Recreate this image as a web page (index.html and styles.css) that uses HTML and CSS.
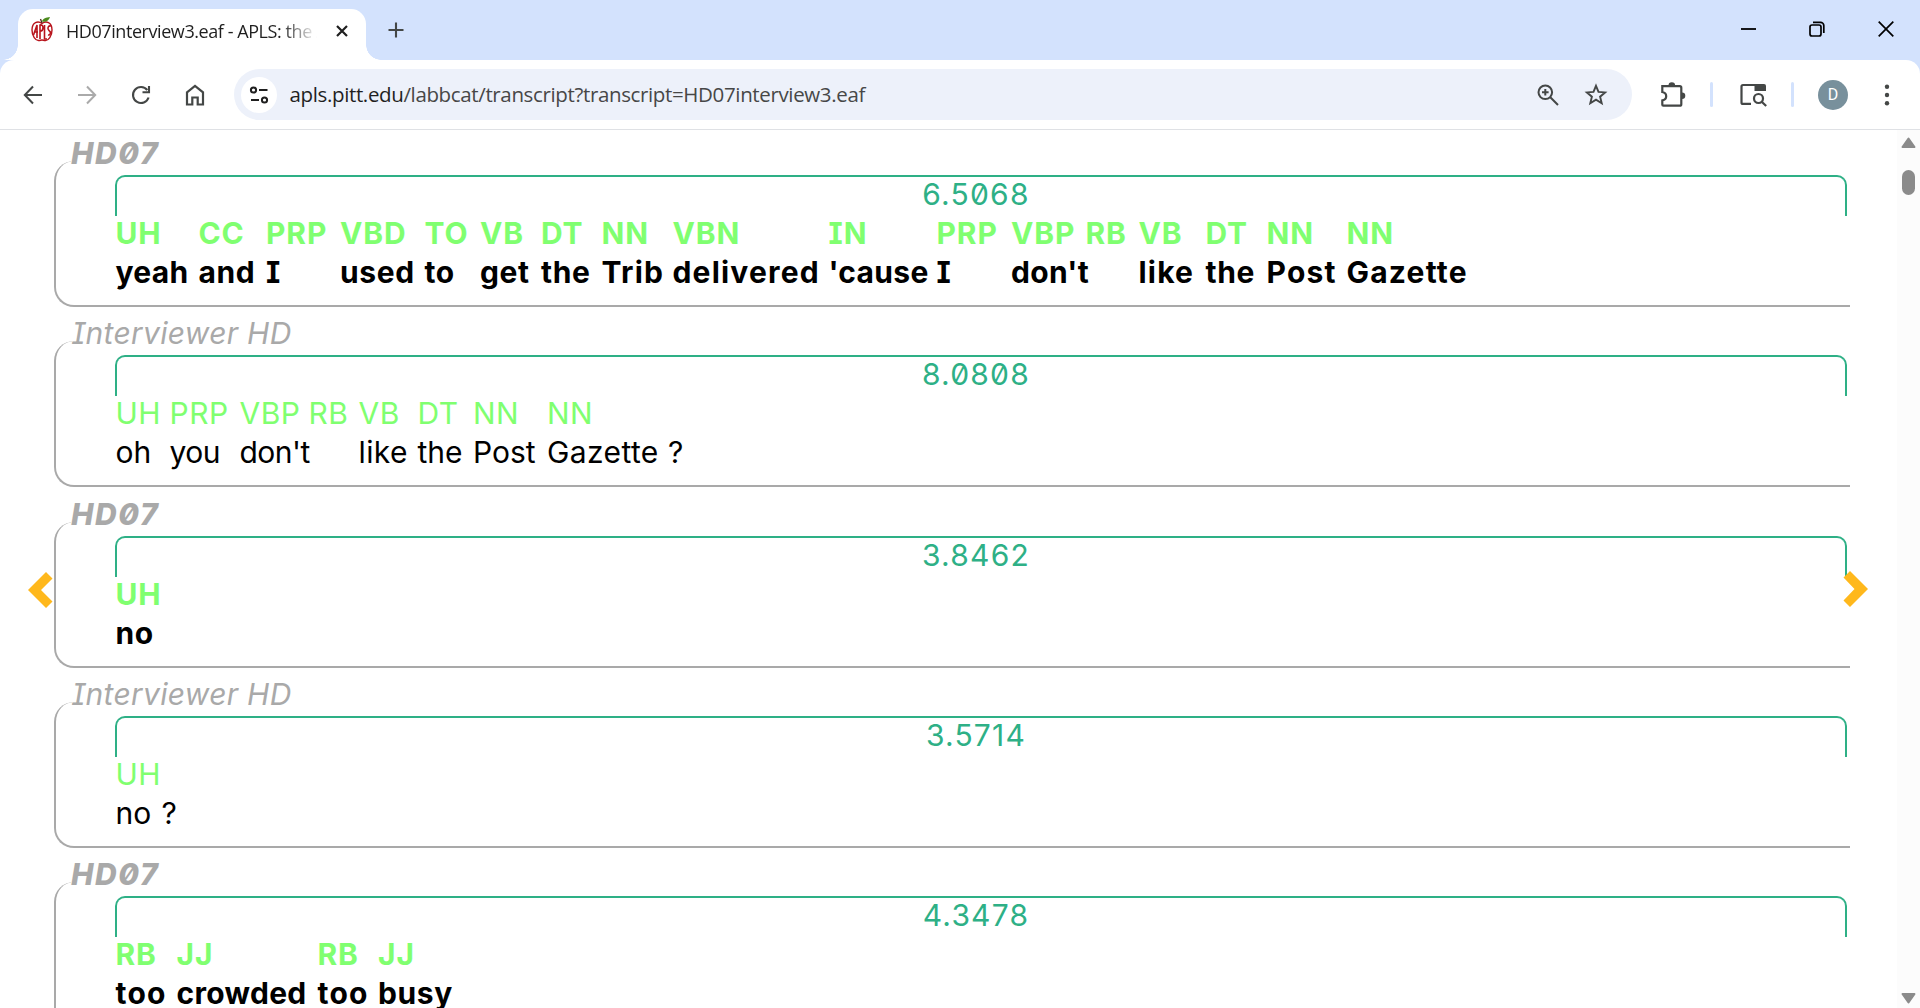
FILE: index.html
```html
<!DOCTYPE html>
<html lang="en">
<head>
<meta charset="utf-8">
<title>HD07interview3.eaf - APLS</title>
<link rel="stylesheet" href="styles.css">
</head>
<body>
<header class="tabstrip">
  <div class="tab">
    <svg class="favicon" width="22" height="26" viewBox="0 0 22 26">
      <path d="M11 6.500C7 3.500 1 5 1 13c0 6 3.500 11 7 10.500 1.500-.2 2-.5 3-.5s1.500.3 3 .5C17.500 24 21 19 21 13c0-8-6-9.500-10-6.500z" fill="#fff" stroke="#b8141c" stroke-width="1.400"/>
      <path d="M2.500 18 6 8v13M3 15h4M9 22V8c4-1 4 6 0 6M13.500 8v14h2.500M20 9c-3-1-4 3-2 4.500 2.500 1.500 1.500 5-1 4.500" fill="none" stroke="#b8141c" stroke-width="1.600"/>
      <path d="M11 6 9.500 2" stroke="#4b2a18" stroke-width="1.300"/>
      <path d="M11 4.500C12 1 15 .5 19 0c-1 3.500-4 5.500-8 4.500z" fill="#4a8a1c"/>
    </svg>
    <span class="tab-title">HD07interview3.eaf - APLS: the A</span>
    <svg class="tab-close" width="12" height="12" viewBox="0 0 12 12"><path d="M1 1l10 10M11 1 1 11" stroke="#1f1f1f" stroke-width="2.200"/></svg>
  </div>
  <svg class="new-tab" width="16" height="16" viewBox="0 0 16 16"><path d="M8 .5v15M.5 8h15" stroke="#444746" stroke-width="2.100"/></svg>
  <div class="window-buttons">
    <svg width="15" height="16" viewBox="0 0 15 16"><path d="M0 8h15" stroke="#000" stroke-width="1.800"/></svg>
    <svg width="16" height="16" viewBox="0 0 16 16" fill="none" stroke="#000" stroke-width="1.700"><rect x="1" y="4" width="11" height="11" rx="2"/><path d="M4 1.300h7.500a3.300 3.300 0 0 1 3.300 3.300V12"/></svg>
    <svg width="16" height="16" viewBox="0 0 16 16"><path d="M.7.700l14.600 14.600M15.300.7.700 15.300" stroke="#000" stroke-width="1.700"/></svg>
  </div>
</header>

<nav class="toolbar">
  <div class="nav-icons">
    <svg width="20" height="20" viewBox="0 0 20 20" fill="none" stroke="#444746" stroke-width="2"><path d="M19 10H3M10 1.500 1.800 10 10 18.500"/></svg>
    <svg width="20" height="20" viewBox="0 0 20 20" fill="none" stroke="#aaa" stroke-width="2"><path d="M1 10h16M10 1.500 18.200 10 10 18.500"/></svg>
    <svg width="20" height="20" viewBox="0 0 20 20" fill="none" stroke="#444746" stroke-width="2.100"><path d="M17.600 12.500A8 8 0 1 1 16.300 5M18 1v6.300h-6.500"/></svg>
    <svg width="20" height="22" viewBox="0 0 20 22" fill="none" stroke="#444746" stroke-width="2.200"><path d="M2 8.300 10 2l8 6.300V20.500h-5.300v-7H7.300v7H2z"/></svg>
  </div>
  <div class="omnibox">
    <span class="site-info"><svg width="20" height="18" viewBox="0 0 20 18" fill="none" stroke="#1f1f1f" stroke-width="2"><circle cx="4.500" cy="4" r="2.600"/><path d="M10 4h8.500M2 14h8"/><circle cx="15.500" cy="14" r="2.600"/></svg></span>
    <span class="url"><span class="host">apls.pitt.edu</span>/labbcat/transcript?transcript=HD07interview3.eaf</span>
    <svg class="magnify" width="22" height="22" viewBox="0 0 22 22" fill="none" stroke="#444746" stroke-width="2"><circle cx="8.300" cy="8.300" r="6.800"/><path d="M13.300 13.300 21 21M8.300 5v6.600M5 8.300h6.600"/></svg>
    <svg class="star" width="24" height="23" viewBox="0 0 24 23" fill="none" stroke="#444746" stroke-width="1.900"><path d="M12 2.800l2.500 6.100 6.600.500-5 4.300 1.600 6.500L12 16.700l-5.700 3.500 1.600-6.500-5-4.300 6.600-.5z"/></svg>
  </div>
  <svg class="puzzle" width="26" height="26" viewBox="0 0 26 26"><path d="M2.300 4.200h17.500a1.500 1.500 0 0 1 1.500 1.500v16.500a1.500 1.500 0 0 1-1.500 1.500H3.300a1 1 0 0 1-1-1v-4.400c5.200-1 5.200-7.300 0-8.300z" fill="none" stroke="#444746" stroke-width="2.200"/><path d="M8.500 3.500a3.300 3.300 0 0 1 6.600 0zM22 10.500a3.300 3.300 0 0 1 0 6.600z" fill="#444746"/></svg>
  <i class="divider"></i>
  <svg class="side-search" width="27" height="24" viewBox="0 0 27 24" fill="none" stroke="#444746" stroke-width="2.200"><path d="M11 20.900H3a1.500 1.500 0 0 1-1.500-1.500V3.500A1.500 1.500 0 0 1 3 2h21"/><path d="M14.500 1H24a2 2 0 0 1 2 2v5H14.500z" fill="#444746" stroke="none"/><circle cx="18.500" cy="15.500" r="4.500"/><path d="m21.700 18.700 4.500 4.300"/></svg>
  <i class="divider"></i>
  <span class="avatar">D</span>
  <svg class="menu" width="6" height="22" viewBox="0 0 6 22" fill="#444746"><circle cx="3" cy="2.800" r="2.200"/><circle cx="3" cy="11" r="2.200"/><circle cx="3" cy="19.200" r="2.200"/></svg>
</nav>

<div class="viewport">
  <main class="transcript">
    <section class="turn main-speaker">
      <h2 class="speaker">HD07</h2>
      <div class="utterance">
        <div class="rate">6.5068</div>
        <div class="tokens">
          <span class="token tight" style="width:83px"><b>UH</b><span>yeah</span></span>
          <span class="token" style="width:67.500px"><b>CC</b><span>and</span></span>
          <span class="token" style="width:74px"><b>PRP</b><span>I</span></span>
          <span class="token" style="width:84.500px"><b>VBD</b><span>used</span></span>
          <span class="token" style="width:55.500px"><b>TO</b><span>to</span></span>
          <span class="token" style="width:61px"><b>VB</b><span>get</span></span>
          <span class="token" style="width:60.500px"><b>DT</b><span>the</span></span>
          <span class="token wide" style="width:71px"><b>NN</b><span>Trib</span></span>
          <span class="token wide" style="width:156px"><b>VBN</b><span>delivered</span></span>
          <span class="token tight" style="width:108px"><b>IN</b><span>'cause</span></span>
          <span class="token" style="width:74.500px"><b>PRP</b><span>I</span></span>
          <span class="token tight" style="width:74.500px"><b>VBP</b><span>don't</span></span>
          <span class="token" style="width:53px"><b>RB</b></span>
          <span class="token wide" style="width:67px"><b>VB</b><span>like</span></span>
          <span class="token" style="width:61px"><b>DT</b><span>the</span></span>
          <span class="token wide" style="width:80px"><b>NN</b><span>Post</span></span>
          <span class="token wide" style="width:130px"><b>NN</b><span>Gazette</span></span>
        </div>
      </div>
    </section>
    <section class="turn">
      <h2 class="speaker">Interviewer HD</h2>
      <div class="utterance">
        <div class="rate">8.0808</div>
        <div class="tokens">
          <span class="token" style="width:54px"><b>UH</b><span>oh</span></span>
          <span class="token tight" style="width:70px"><b>PRP</b><span>you</span></span>
          <span class="token tight" style="width:69px"><b>VBP</b><span>don't</span></span>
          <span class="token" style="width:50px"><b>RB</b></span>
          <span class="token wide" style="width:59px"><b>VB</b><span>like</span></span>
          <span class="token" style="width:55.500px"><b>DT</b><span>the</span></span>
          <span class="token" style="width:74px"><b>NN</b><span>Post</span></span>
          <span class="token wide" style="width:121px"><b>NN</b><span>Gazette</span></span>
          <span class="token" style="width:20px"><b>&nbsp;</b><span>?</span></span>
        </div>
      </div>
    </section>
    <section class="turn main-speaker">
      <h2 class="speaker">HD07</h2>
      <div class="utterance">
        <div class="rate">3.8462</div>
        <div class="tokens"><span class="token" style="width:50px"><b>UH</b><span>no</span></span></div>
      </div>
    </section>
    <section class="turn">
      <h2 class="speaker">Interviewer HD</h2>
      <div class="utterance">
        <div class="rate">3.5714</div>
        <div class="tokens">
          <span class="token" style="width:46px"><b>UH</b><span>no</span></span>
          <span class="token" style="width:20px"><b>&nbsp;</b><span>?</span></span>
        </div>
      </div>
    </section>
    <section class="turn main-speaker">
      <h2 class="speaker">HD07</h2>
      <div class="utterance">
        <div class="rate">4.3478</div>
        <div class="tokens">
          <span class="token wide" style="width:61px"><b>RB</b><span>too</span></span>
          <span class="token tight" style="width:141px"><b>JJ</b><span>crowded</span></span>
          <span class="token wide" style="width:60.500px"><b>RB</b><span>too</span></span>
          <span class="token" style="width:80px"><b>JJ</b><span>busy</span></span>
        </div>
      </div>
    </section>
  </main>
  <div class="scrollbar">
    <svg width="15" height="12" viewBox="0 0 15 12"><path d="M7.500 1.500 13.500 10H1.500z" fill="#8b8b8b" stroke="#8b8b8b" stroke-width="2" stroke-linejoin="round"/></svg>
    <i class="thumb"></i>
    <svg class="down" width="15" height="12" viewBox="0 0 15 12"><path d="M7.500 10.500 13.500 2H1.500z" fill="#8b8b8b" stroke="#8b8b8b" stroke-width="2" stroke-linejoin="round"/></svg>
  </div>
  <svg class="page-arrow prev" width="25" height="36" viewBox="0 0 25 36"><path d="M0 18 18 0l6.500 6.500L13 18l11.500 11.500L18 36z" fill="#ffb81c"/></svg>
  <svg class="page-arrow next" width="25" height="36" viewBox="0 0 25 36"><path d="M25 18 7 0 .5 6.500 11.500 18 .5 29.500 7 36z" fill="#ffb81c"/></svg>
</div>
</body>
</html>
```
FILE: styles.css
```css
* { box-sizing: border-box; }
svg { display: block; flex: none; }
body {
  margin: 0;
  height: 1008px;
  overflow: hidden;
  display: flex;
  flex-direction: column;
  background: #d3e2fd;
  font-family: "Open Sans", "Noto Sans", sans-serif;
}

/* Tab strip */
.tabstrip {
  height: 60px;
  flex: none;
  display: flex;
  align-items: flex-start;
  padding-left: 18px;
}
.tab {
  position: relative;
  width: 348px;
  height: 51px;
  margin-top: 9px;
  padding: 0 18px 8px 13px;
  border-radius: 15px 15px 0 0;
  background: #fff;
  display: flex;
  align-items: center;
}
.tab::before,
.tab::after {
  content: "";
  position: absolute;
  bottom: 0;
  width: 15px;
  height: 15px;
}
.tab::before { left: -15px; background: radial-gradient(circle at 0 0, transparent 14.500px, #fff 15px); }
.tab::after { right: -15px; background: radial-gradient(circle at 100% 0, transparent 14.500px, #fff 15px); }
.favicon { margin-top: -2px; }
.tab-title {
  width: 251px;
  margin-left: 13px;
  overflow: hidden;
  white-space: nowrap;
  font-size: 18px;
  letter-spacing: -0.430px;
  color: #1f1f1f;
  -webkit-mask-image: linear-gradient(90deg, #000 215px, transparent 251px);
  mask-image: linear-gradient(90deg, #000 215px, transparent 251px);
}
.tab-close { margin-left: auto; }
.new-tab { margin: 22px 0 0 22px; }
.window-buttons {
  display: flex;
  gap: 53px;
  margin: 21px 26px 0 auto;
}

/* Toolbar */
.toolbar {
  height: 70px;
  flex: none;
  display: flex;
  align-items: center;
  padding: 0 30px 0 23px;
  border-bottom: 1px solid #dfe1e5;
  border-radius: 14px 14px 0 0;
  background: #fff;
}
.nav-icons { display: flex; gap: 34px; align-items: center; width: 211px; }
.omnibox {
  width: 1398px;
  height: 51px;
  display: flex;
  align-items: center;
  padding: 0 24px 0 7px;
  border-radius: 26px;
  background: #edf1fa;
}
.site-info {
  width: 36px;
  height: 36px;
  border-radius: 50%;
  background: #fff;
  display: grid;
  place-items: center;
}
.url {
  margin-left: 12.500px;
  padding-bottom: 2px;
  font-size: 20.500px;
  letter-spacing: -0.360px;
  color: #474747;
}
.host { color: #1f1f1f; }
.magnify { margin-left: auto; }
.star { margin-left: 25px; }
.puzzle { margin-left: 28px; }
.divider { width: 3px; height: 25px; border-radius: 2px; background: #d3e2fd; margin-left: 24px; }
.side-search { margin-left: 27px; }
.avatar {
  width: 30px;
  height: 30px;
  margin-left: 24px;
  border-radius: 50%;
  background: #78909c;
  color: #fff;
  font: 16px/30px Roboto, sans-serif;
  text-align: center;
}
.menu { margin-left: auto; }

/* Page */
.viewport {
  position: relative;
  flex: 1;
  min-height: 0;
  overflow: hidden;
  display: flex;
  background: #fff;
  font: 30px Inter, "Liberation Sans", sans-serif;
  font-feature-settings: "zero", "cv08";
}
.transcript { flex: 1; margin-top: -3.330px; padding: 0 47px 0 54px; }
.turn { height: 180.330px; padding-top: 8.330px; }
.speaker {
  position: relative;
  width: fit-content;
  height: 36px;
  margin: 0 0 -10px 18px;
  background: #fff;
  font-size: 30px;
  font-weight: 400;
  font-style: italic;
  line-height: 36px;
  letter-spacing: 0.300px;
  color: #a9a9a9;
}
.utterance {
  height: 146px;
  padding: 14px 3px 0 59px;
  border: solid #a9a9a9;
  border-width: 0 0 2px 2px;
  border-radius: 20px 0 0 20px;
}
.rate {
  height: 41px;
  padding-right: 10px;
  border: 2px solid #2eb086;
  border-bottom: 0;
  border-radius: 10px 10px 0 0;
  text-align: center;
  line-height: 34px;
  letter-spacing: 1.200px;
  color: #2eb086;
}
.tokens { display: flex; margin: -2px 0 0 0.500px; }
.token { display: flex; flex-direction: column; flex: none; white-space: nowrap; line-height: 39px; }
.token b { font-weight: inherit; color: #80ff70; letter-spacing: 0.500px; }
.token span { color: #000; }
.wide span { letter-spacing: 0.400px; }
.tight span { letter-spacing: -0.500px; }
.main-speaker .speaker { font-weight: 800; margin-left: 17px; letter-spacing: 1.600px; }
.main-speaker .tokens { font-weight: 700; letter-spacing: 0.600px; }
.main-speaker .token b { letter-spacing: 0.900px; }
.main-speaker .wide span { letter-spacing: 1.200px; }
.main-speaker .tight span { letter-spacing: 0.300px; }

.scrollbar {
  width: 23px;
  padding: 7px 0 4px 4px;
  background: #fcfcfc;
  display: flex;
  flex-direction: column;
}
.thumb { width: 13px; height: 25px; margin: 21px 0 0 1px; border-radius: 7px; background: #8b8b8b; }
.down { margin-top: auto; }

.page-arrow { position: absolute; }
.prev { left: 27.500px; top: 442px; }
.next { left: 1843px; top: 441px; }
```
